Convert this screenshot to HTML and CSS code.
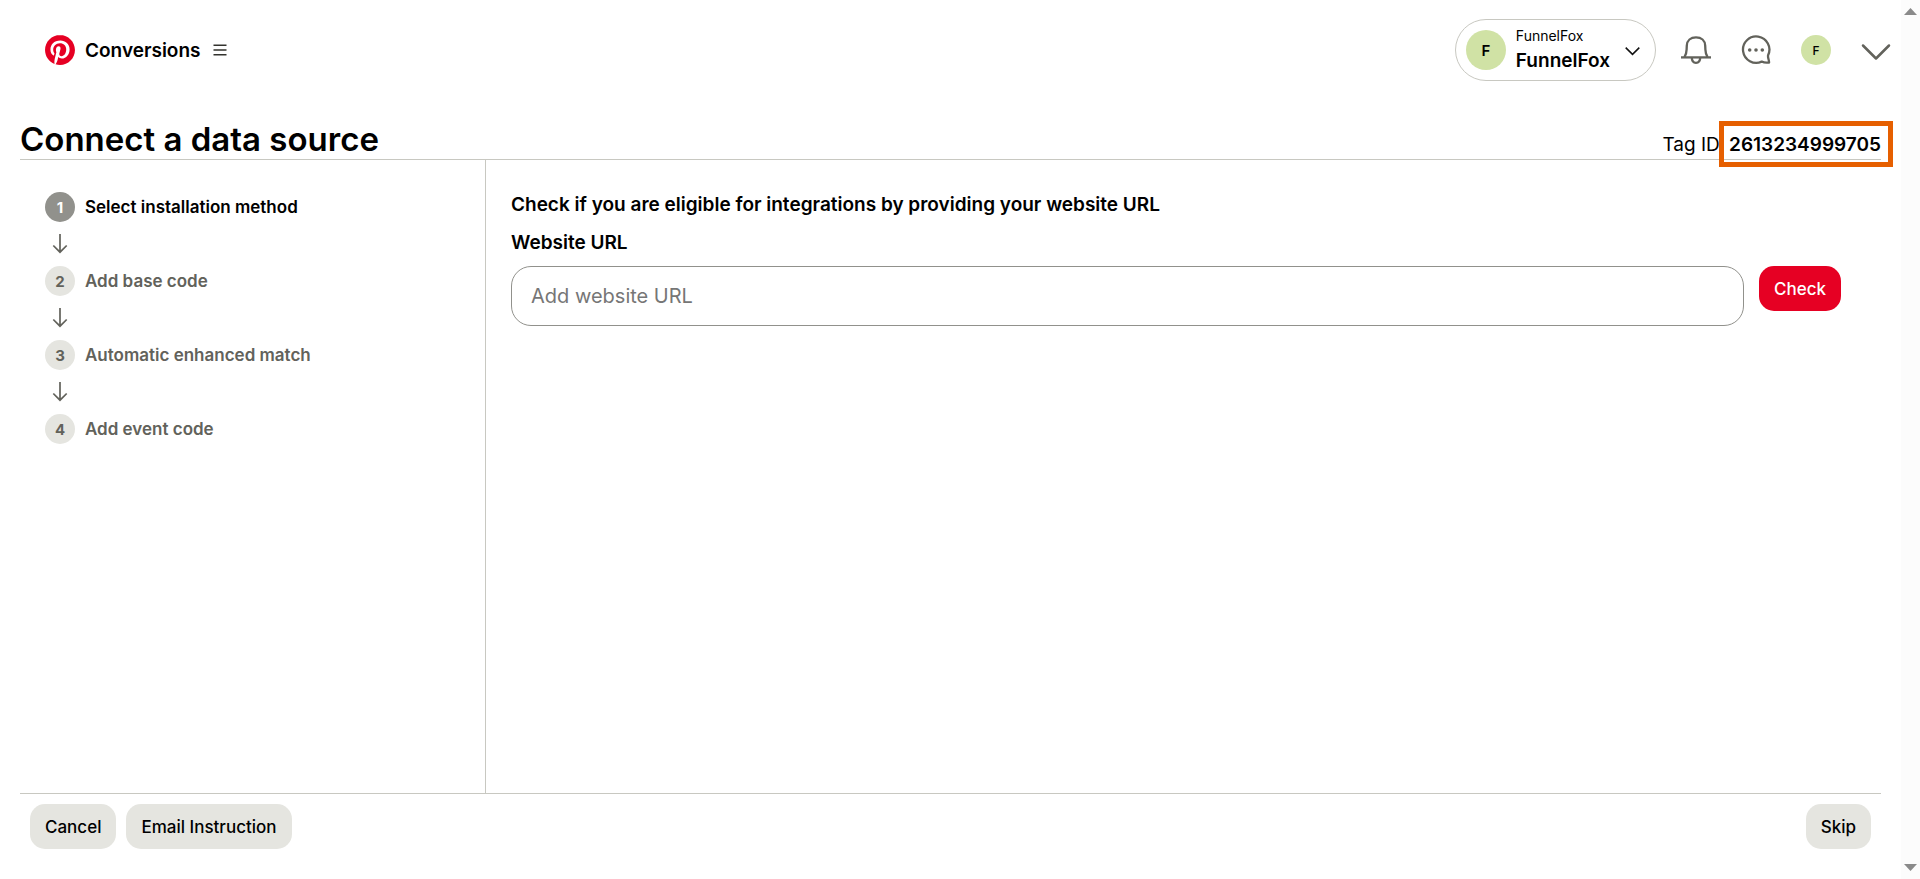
FILE: index.html
```html
<!DOCTYPE html>
<html lang="en">
<head>
<meta charset="utf-8">
<title>Connect a data source</title>
<link rel="stylesheet" href="styles.css">
</head>
<body>
<div class="page">
  <header class="topbar">
    <a class="brand" href="#" aria-label="Pinterest home">
      <svg class="icon-30" viewBox="0 0 24 24" fill="#e60023"><path d="M12.017 0C5.396 0 .029 5.367.029 11.987c0 5.079 3.158 9.417 7.618 11.162-.105-.949-.199-2.403.041-3.439.219-.937 1.406-5.957 1.406-5.957s-.359-.72-.359-1.781c0-1.663.967-2.911 2.168-2.911 1.024 0 1.518.769 1.518 1.688 0 1.029-.653 2.567-.992 3.992-.285 1.193.6 2.165 1.775 2.165 2.128 0 3.768-2.245 3.768-5.487 0-2.861-2.063-4.869-5.008-4.869-3.41 0-5.409 2.562-5.409 5.199 0 1.033.394 2.143.889 2.741.099.12.112.225.085.345-.09.375-.293 1.199-.334 1.363-.053.225-.172.271-.401.165-1.495-.69-2.433-2.878-2.433-4.646 0-3.776 2.748-7.252 7.92-7.252 4.158 0 7.392 2.967 7.392 6.923 0 4.135-2.607 7.462-6.233 7.462-1.214 0-2.354-.629-2.758-1.379l-.749 2.848c-.269 1.045-1.004 2.352-1.498 3.146 1.123.345 2.306.535 3.55.535 6.607 0 11.985-5.365 11.985-11.987C23.97 5.39 18.592.026 11.985.026L12.017 0z"/></svg>
    </a>
    <span class="product">Conversions</span>
    <button class="menu" type="button" aria-label="Menu">
      <svg width="14" height="12" viewBox="0 0 14 12" stroke="#33332e" stroke-width="1.4"><path d="M.5 1.2h13M.5 6h13M.5 10.8h13"/></svg>
    </button>
    <div class="tools">
      <button class="account" type="button">
        <span class="avatar avatar-large">F</span>
        <span class="account-names"><span class="account-owner">FunnelFox</span><span class="account-name">FunnelFox</span></span>
        <svg width="15" height="15" viewBox="0 0 15 15" fill="none" stroke="#111" stroke-width="1.5"><path d="M.7 4.6l6.8 6.8 6.8-6.8"/></svg>
      </button>
      <button class="tool" type="button" aria-label="Notifications">
        <svg class="icon-30" viewBox="0 0 30 30" fill="none" stroke="#62625b" stroke-width="2.3"><path d="M0 22.400h30"/><path d="M3.400 22.200c1.600-2.200 2.100-4.600 2.200-7.600l.2-4C6 5.400 9.700 2.300 15 2.300s9 3.100 9.200 8.300l.2 4c.1 3 .6 5.400 2.200 7.600"/><path d="M10.800 22.500c0 3.700 1.800 5.300 4.200 5.300s4.200-1.600 4.200-5.300"/></svg>
      </button>
      <button class="tool" type="button" aria-label="Messages">
        <svg class="icon-30" viewBox="0 0 30 30" fill="none" stroke="#62625b" stroke-width="2.300" stroke-linejoin="round"><path d="M20.700 26.600A13.200 13.200 0 1 1 27.100 20.300C26.600 22.500 28 24.500 28.100 27.500C25.500 27.900 23 27.800 20.700 26.600z"/><g fill="#62625b" stroke="none"><circle cx="8.700" cy="15" r="1.800"/><circle cx="15" cy="15" r="1.800"/><circle cx="21.300" cy="15" r="1.800"/></g></svg>
      </button>
      <button class="tool" type="button" aria-label="Your profile"><span class="avatar">F</span></button>
      <button class="tool" type="button" aria-label="More options">
        <svg class="icon-30" viewBox="0 0 30 30" fill="none" stroke="#62625b" stroke-width="2.500" stroke-linecap="round" stroke-linejoin="round"><path d="M2 10.500l13 13 13-13"/></svg>
      </button>
    </div>
  </header>

  <main class="content">
    <div class="heading">
      <h1>Connect a data source</h1>
      <p class="tag">Tag ID <strong class="tag-id">2613234999705</strong></p>
    </div>
    <div class="columns">
      <ol class="steps">
        <li class="step step-current"><span class="number">1</span>Select installation method</li>
        <li class="arrow" aria-hidden="true"><svg width="30" height="20" viewBox="0 0 30 20" fill="none" stroke="#62625b" stroke-width="1.700"><path d="M15 0v18M8.300 11.500L15 18.200l6.700-6.700"/></svg></li>
        <li class="step"><span class="number">2</span>Add base code</li>
        <li class="arrow" aria-hidden="true"><svg width="30" height="20" viewBox="0 0 30 20" fill="none" stroke="#62625b" stroke-width="1.700"><path d="M15 0v18M8.300 11.500L15 18.200l6.700-6.700"/></svg></li>
        <li class="step"><span class="number">3</span>Automatic enhanced match</li>
        <li class="arrow" aria-hidden="true"><svg width="30" height="20" viewBox="0 0 30 20" fill="none" stroke="#62625b" stroke-width="1.700"><path d="M15 0v18M8.300 11.500L15 18.200l6.700-6.700"/></svg></li>
        <li class="step"><span class="number">4</span>Add event code</li>
      </ol>
      <form class="eligibility">
        <h2>Check if you are eligible for integrations by providing your website URL</h2>
        <label for="website-url">Website URL</label>
        <div class="url-row">
          <input id="website-url" type="text" placeholder="Add website URL">
          <button class="button button-primary" type="button">Check</button>
        </div>
      </form>
    </div>
    <footer class="actions">
      <button class="button" type="button">Cancel</button>
      <button class="button" type="button">Email Instruction</button>
      <button class="button button-end" type="button">Skip</button>
    </footer>
  </main>
</div>
<div class="scrollbar" aria-hidden="true">
  <svg width="13" height="7" viewBox="0 0 13 7" fill="#8a8a8a"><path d="M0 7L6.500 0 13 7z"/></svg>
  <svg width="13" height="7" viewBox="0 0 13 7" fill="#8a8a8a"><path d="M0 0h13L6.500 7z"/></svg>
</div>
</body>
</html>
```
FILE: styles.css
```css
* { box-sizing: border-box; }

body {
  margin: 0;
  display: flex;
  min-height: 100vh;
  background: #fff;
  color: #000;
  font-family: Inter, "Liberation Sans", sans-serif;
  font-size: 16px;
}

h1, h2, p, ol { margin: 0; padding: 0; }
button { margin: 0; padding: 0; border: 0; background: none; color: inherit; font: inherit; cursor: pointer; }
svg { display: block; flex: none; }

.page { flex: 1; min-width: 0; display: flex; flex-direction: column; }
.icon-30 { width: 30px; height: 30px; }

.topbar { display: flex; align-items: center; height: 100px; padding: 0 10px 0 45px; }
.product { margin-left: 10px; font-size: 19px; font-weight: 600; }
.menu { margin-left: 12px; }
.tools { display: flex; align-items: center; gap: 30px; margin-left: auto; }
.tool { width: 30px; height: 30px; }

.account {
  display: flex;
  align-items: center;
  height: 62px;
  margin-right: -5px;
  padding: 0 15px 0 10px;
  border: 1px solid #c8c8c1;
  border-radius: 31px;
  text-align: left;
}
.account-names { display: flex; flex-direction: column; margin: 0 15px 0 10px; }
.account-owner { font-size: 14px; line-height: 22px; }
.account-name { font-size: 19px; line-height: 28px; font-weight: 600; }

.avatar {
  display: flex;
  align-items: center;
  justify-content: center;
  width: 30px;
  height: 30px;
  border-radius: 50%;
  background: #d0e2a5;
  font-size: 12px;
  font-weight: 500;
}
.avatar-large { width: 40px; height: 40px; font-size: 15px; font-weight: 600; }

.content { flex: 1; display: flex; flex-direction: column; margin: 0 20px; }
.heading {
  display: flex;
  align-items: flex-end;
  justify-content: space-between;
  height: 60px;
  border-bottom: 1px solid #c8c8c1;
}
h1 { font-size: 33px; line-height: 40px; font-weight: 600; }
.tag { font-size: 19px; line-height: 28px; }
.tag-id { position: relative; margin-left: 4px; font-weight: 600; }
.tag-id::after {
  content: "";
  position: absolute;
  inset: -12px -12px -11px -10px;
  border: 5px solid #e65f00;
}

.columns { flex: 1; display: flex; }
.steps { width: 466px; padding: 32px 25px; border-right: 1px solid #c8c8c1; list-style: none; }
.step { display: flex; align-items: center; gap: 10px; height: 30px; color: #62625b; font-size: 17px; font-weight: 600; }
.step-current { color: #000; }
.number {
  display: flex;
  align-items: center;
  justify-content: center;
  width: 30px;
  height: 30px;
  border-radius: 50%;
  background: #e5e5e0;
  font-size: 15px;
  font-weight: 700;
}
.step-current .number { background: #91918c; color: #fff; }
.arrow { display: flex; align-items: center; height: 44px; }

.eligibility { flex: 1; padding: 31px 40px 0 25px; }
h2, label { display: block; font-size: 19px; line-height: 28px; font-weight: 600; }
label { margin: 10px 0 9px; }
.url-row { display: flex; align-items: flex-start; gap: 15px; }
input {
  flex: 1;
  min-width: 0;
  height: 60px;
  padding: 0 19px;
  border: 1px solid #91918c;
  border-radius: 20px;
  background: #fff;
  color: #000;
  font: inherit;
  font-size: 20px;
}
input::placeholder { color: #767676; opacity: 1; }

.button {
  height: 45px;
  padding: 0 15px;
  border-radius: 15px;
  background: #e5e5e0;
  font-size: 17px;
  font-weight: 500;
  white-space: nowrap;
}
.button-primary { background: #e60023; color: #fff; }

.actions { display: flex; gap: 10px; padding: 10px 10px 30px; border-top: 1px solid #c8c8c1; }
.button-end { margin-left: auto; }

.scrollbar {
  display: flex;
  flex-direction: column;
  align-items: center;
  justify-content: space-between;
  width: 19px;
  padding: 8px 0;
  background: #fcfcfc;
}
```
